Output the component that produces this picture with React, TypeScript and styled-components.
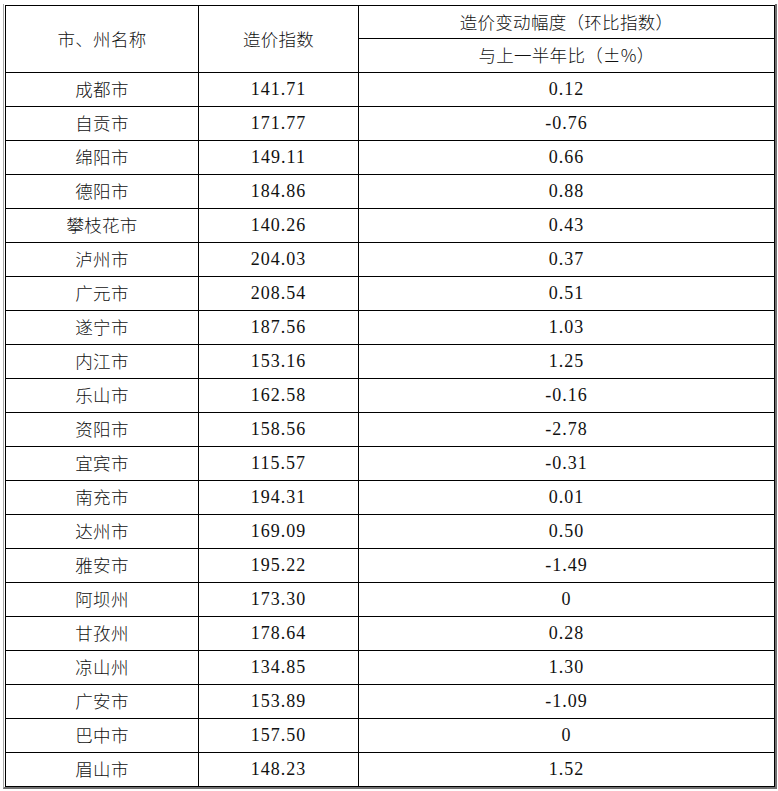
import styled, { createGlobalStyle } from "styled-components";

const GlobalStyle = createGlobalStyle`
  html, body {
    margin: 0;
    padding: 0;
    background: #ffffff;
  }
  body {
    font-family: "Noto Sans CJK SC", "Liberation Serif", serif;
    color: #111;
  }
`;

// thin grey frame that sits round the table like a shadow
const Frame = styled.div`
  display: inline-block;
  margin: 4px 0 0 3px;
  padding: 1px 0 0 1px;
  border-left: 1px solid #a8a8a8;
  border-right: 2px solid #707070;
  border-bottom: 2px solid #707070;
`;

const Table = styled.table`
  border-collapse: collapse;
  table-layout: fixed;
  width: 769px;
  border: 1px solid #000;
`;

const HeadCell = styled.th<{ $h?: number }>`
  border: 1px solid #000;
  height: ${(p) => (p.$h ?? 33) - 2}px;
  padding: 0 0 2px;
  font-weight: 300;
  font-size: 17.5px;
  letter-spacing: 0.3px;
  text-align: center;
  vertical-align: middle;
  font-family: "Noto Sans CJK SC", "Liberation Serif", serif;
`;

const Cell = styled.td<{ $num?: boolean }>`
  border: 1px solid #000;
  height: ${(p) => (p.$num ? "33px" : "31px")};
  padding: ${(p) => (p.$num ? "0" : "0 0 2px")};
  text-align: center;
  vertical-align: middle;
  font-size: ${(p) => (p.$num ? "18px" : "17.5px")};
  font-weight: ${(p) => (p.$num ? "normal" : "300")};
  letter-spacing: ${(p) => (p.$num ? "1px" : "0.3px")};
  font-family: ${(p) =>
    p.$num
      ? '"Liberation Serif", "Noto Sans CJK SC", serif'
      : '"Noto Sans CJK SC", "Liberation Serif", serif'};
`;

const rows: [string, string, string][] = [
  ["成都市", "141.71", "0.12"],
  ["自贡市", "171.77", "-0.76"],
  ["绵阳市", "149.11", "0.66"],
  ["德阳市", "184.86", "0.88"],
  ["攀枝花市", "140.26", "0.43"],
  ["泸州市", "204.03", "0.37"],
  ["广元市", "208.54", "0.51"],
  ["遂宁市", "187.56", "1.03"],
  ["内江市", "153.16", "1.25"],
  ["乐山市", "162.58", "-0.16"],
  ["资阳市", "158.56", "-2.78"],
  ["宜宾市", "115.57", "-0.31"],
  ["南充市", "194.31", "0.01"],
  ["达州市", "169.09", "0.50"],
  ["雅安市", "195.22", "-1.49"],
  ["阿坝州", "173.30", "0"],
  ["甘孜州", "178.64", "0.28"],
  ["凉山州", "134.85", "1.30"],
  ["广安市", "153.89", "-1.09"],
  ["巴中市", "157.50", "0"],
  ["眉山市", "148.23", "1.52"],
];

export default function App() {
  return (
    <>
      <GlobalStyle />
      <Frame>
        <Table>
          <colgroup>
            <col style={{ width: 193 }} />
            <col style={{ width: 160 }} />
            <col style={{ width: 416 }} />
          </colgroup>
          <thead>
            <tr>
              <HeadCell rowSpan={2}>市、州名称</HeadCell>
              <HeadCell rowSpan={2}>造价指数</HeadCell>
              <HeadCell $h={32}>造价变动幅度（环比指数）</HeadCell>
            </tr>
            <tr>
              <HeadCell $h={33}>与上一半年比（±%）</HeadCell>
            </tr>
          </thead>
          <tbody>
            {rows.map(([city, index, change]) => (
              <tr key={city}>
                <Cell>{city}</Cell>
                <Cell $num>{index}</Cell>
                <Cell $num>{change}</Cell>
              </tr>
            ))}
          </tbody>
        </Table>
      </Frame>
    </>
  );
}
